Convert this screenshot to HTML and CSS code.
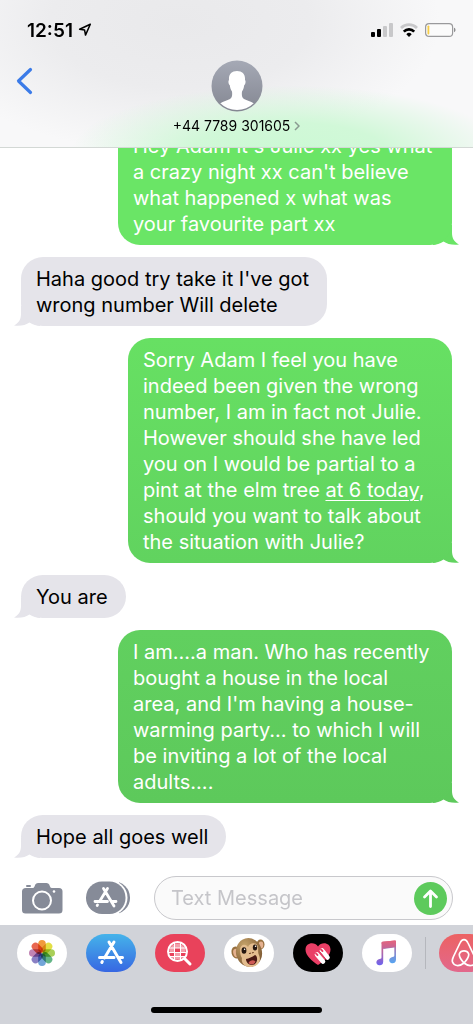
FILE: index.html
```html
<!DOCTYPE html>
<html lang="en">
<head>
  <meta charset="UTF-8" />
  <meta name="viewport" content="width=device-width, initial-scale=1.0"/>
  <title>Messages</title>
  <link rel="stylesheet" href="styles.css">
</head>
<body>
  <header class="header">
    <div class="status">
      <div class="clock">
        <span>12:51</span>
        <svg width="14" height="14" viewBox="0 0 14 14"><path d="M12.3 1.3L1.6 6.2l5 .9.9 5z" fill="none" stroke="#000" stroke-width="1.5" stroke-linejoin="round"/></svg>
      </div>
      <div class="indicators">
        <svg width="22" height="14" viewBox="0 0 22 14">
          <rect x="0" y="9" width="4" height="5" rx="1"/>
          <rect x="6" y="6" width="4" height="8" rx="1"/>
          <rect x="12" y="3" width="4" height="11" rx="1" fill="#c8c8ca"/>
          <rect x="18" y="0" width="4" height="14" rx="1" fill="#c8c8ca"/>
        </svg>
        <svg width="18" height="14" viewBox="0 0 18 14" fill="none" stroke-width="2.7">
          <path d="M1 5a11.3 11.3 0 0 1 16 0" stroke="#c8c8ca"/>
          <path d="M3.8 8.6a7.3 7.3 0 0 1 10.400 0" stroke="#000"/>
          <path d="M6.300 11.200a3.800 3.800 0 0 1 5.400 0L9 14z" fill="#000"/>
        </svg>
        <svg width="31" height="14" viewBox="0 0 31 14">
          <rect x=".6" y=".6" width="27" height="12.800" rx="3.500" fill="#fbfbfb" stroke="#9a9a9c" stroke-width="1.200"/>
          <rect x="2.500" y="2.500" width="1.800" height="9" rx=".8" fill="#f7ce46"/>
          <path d="M29 4.800c2 .6 2 3.800 0 4.400z" fill="#8e8e90"/>
        </svg>
      </div>
    </div>
    <div class="contact">
      <button class="back" aria-label="Back">
        <svg width="17" height="28" viewBox="0 0 17 28"><path d="M14.500 2.500L2.500 14l12 11.500" fill="none" stroke="#3b7be8" stroke-width="3.200" stroke-linecap="round" stroke-linejoin="round"/></svg>
      </button>
      <button class="person">
        <svg width="52" height="52" viewBox="0 0 52 52">
          <defs>
            <linearGradient id="avatar" x2="0" y2="1"><stop stop-color="#a5a9b5"/><stop offset="1" stop-color="#848792"/></linearGradient>
            <clipPath id="face"><circle cx="26" cy="26" r="24"/></clipPath>
          </defs>
          <circle cx="26" cy="26" r="25.500" fill="url(#avatar)"/>
          <path clip-path="url(#face)" d="M26 11c-5.500 0-8.500 3.500-8 9-1.200 1-.4 4.500.9 5.500.3 3 1 4.500 2.100 6 .4 3.500.2 6-2 7.500-3 1.500-6.500 2-10 4.500v9h34v-9c-3.500-2.500-7-3-10-4.500-2.200-1.500-2.400-4-2-7.500 1.100-1.500 1.800-3 2.100-6 1.300-1 2.100-4.500.9-5.500.5-5.500-2.500-9-8-9z" fill="#fff"/>
        </svg>
        <span class="number">+44 7789 301605 <svg width="6" height="10" viewBox="0 0 6 10"><path d="M1 1l4 4-4 4" fill="none" stroke="#8a9a91" stroke-width="1.500"/></svg></span>
      </button>
    </div>
  </header>

  <main class="chat">
    <p class="bubble sent first">Hey Adam it's Julie xx yes what<br>a crazy night xx can't believe<br>what happened x what was<br>your favourite part xx<svg class="tail" viewBox="0 0 26 20"><path d="M19 0v8c0 5 2 9 7 11.500-6 1-12-.5-15.500-3C7 18.500 3 20 0 20V0z"/></svg></p>
    <p class="bubble received">Haha good try take it I've got<br>wrong number Will delete<svg class="tail" viewBox="0 0 26 20"><path d="M7 0v8c0 5-2 9-7 11.500 6 1 12-.5 15.500-3C19 18.500 23 20 26 20V0z"/></svg></p>
    <p class="bubble sent second">Sorry Adam I feel you have<br>indeed been given the wrong<br>number, I am in fact not Julie.<br>However should she have led<br>you on I would be partial to a<br>pint at the elm tree <a href="#">at 6 today</a>,<br>should you want to talk about<br>the situation with Julie?<svg class="tail" viewBox="0 0 26 20"><path d="M19 0v8c0 5 2 9 7 11.500-6 1-12-.5-15.500-3C7 18.500 3 20 0 20V0z"/></svg></p>
    <p class="bubble received">You are<svg class="tail" viewBox="0 0 26 20"><path d="M7 0v8c0 5-2 9-7 11.500 6 1 12-.5 15.500-3C19 18.500 23 20 26 20V0z"/></svg></p>
    <p class="bubble sent third">I am....a man. Who has recently<br>bought a house in the local<br>area, and I'm having a house-<br>warming party... to which I will<br>be inviting a lot of the local<br>adults....<svg class="tail" viewBox="0 0 26 20"><path d="M19 0v8c0 5 2 9 7 11.500-6 1-12-.5-15.500-3C7 18.500 3 20 0 20V0z"/></svg></p>
    <p class="bubble received">Hope all goes well<svg class="tail" viewBox="0 0 26 20"><path d="M7 0v8c0 5-2 9-7 11.500 6 1 12-.5 15.500-3C19 18.500 23 20 26 20V0z"/></svg></p>
  </main>

  <form class="compose">
    <button type="button" aria-label="Camera">
      <svg width="41" height="32" viewBox="0 0 41 32">
        <path d="M4 6h6.500q1.500 0 2-1.500l.8-2Q14 1 16 1h8.500q2 0 2.700 1.500l.8 2Q28.500 6 30 6h7q3.500 0 3.500 3.500V28q0 3.500-3.500 3.500H3.500Q0 31.500 0 28V9.500Q0 6 4 6z" fill="#868b98"/>
        <rect x="4" y="3" width="5" height="2" rx="1" fill="#868b98"/>
        <circle cx="20" cy="18.500" r="9" fill="none" stroke="#fff" stroke-width="2"/>
        <circle cx="32" cy="9.500" r="1.300" fill="#fff"/>
      </svg>
    </button>
    <button type="button" aria-label="Apps">
      <svg width="45" height="34" viewBox="0 0 45 34">
        <defs><clipPath id="behind"><path d="M33 0h12v34H33z"/></clipPath></defs>
        <rect x="4" y=".5" width="40" height="32.500" rx="16" fill="#868b98" clip-path="url(#behind)"/>
        <rect x="1" y="-.5" width="40.500" height="34.500" rx="17" fill="#fff" clip-path="url(#behind)"/>
        <rect y=".5" width="39.500" height="32.500" rx="16" fill="#868b98"/>
        <g stroke="#fff" stroke-width="2.800" stroke-linecap="round" fill="none"><path d="M17.500 7.500L28 25M21.500 7.500l-8 13M11.500 24l-.3.500M9 20.500h12.500M26.500 20.500H30"/></g>
      </svg>
    </button>
    <div class="field">
      <input type="text" aria-label="Text Message" placeholder="Text Message">
      <button class="send" aria-label="Send">
        <svg width="33" height="33" viewBox="0 0 33 33"><circle cx="16.500" cy="16.500" r="16.500" fill="#5dca5c"/><path d="M16.500 24.500V9.500M10.500 15l6-6 6 6" fill="none" stroke="#fff" stroke-width="2.800" stroke-linecap="round" stroke-linejoin="round"/></svg>
      </button>
    </div>
  </form>

  <footer class="drawer">
    <nav class="apps">
      <button class="app" aria-label="Photos">
        <svg class="petals" width="50" height="38" viewBox="0 0 50 38">
          <rect x="21.200" y="6" width="7.600" height="12.500" rx="3.800" fill="#f09a3c"/>
          <rect x="21.200" y="6" width="7.600" height="12.500" rx="3.800" fill="#e3df45" transform="rotate(45 25 19)"/>
          <rect x="21.200" y="6" width="7.600" height="12.500" rx="3.800" fill="#a9cf58" transform="rotate(90 25 19)"/>
          <rect x="21.200" y="6" width="7.600" height="12.500" rx="3.800" fill="#63b586" transform="rotate(135 25 19)"/>
          <rect x="21.200" y="6" width="7.600" height="12.500" rx="3.800" fill="#72a5d8" transform="rotate(180 25 19)"/>
          <rect x="21.200" y="6" width="7.600" height="12.500" rx="3.800" fill="#8a80c4" transform="rotate(225 25 19)"/>
          <rect x="21.200" y="6" width="7.600" height="12.500" rx="3.800" fill="#c184b4" transform="rotate(270 25 19)"/>
          <rect x="21.200" y="6" width="7.600" height="12.500" rx="3.800" fill="#e86750" transform="rotate(315 25 19)"/>
        </svg>
      </button>
      <button class="app store" aria-label="App Store">
        <svg width="50" height="38" viewBox="0 0 50 38"><path d="M23 8l12 20.500M28 8l-9.500 16M16.300 27.500l-.5 1M13.500 23.500H28M33.500 23.500h3" fill="none" stroke="#fff" stroke-width="3" stroke-linecap="round"/></svg>
      </button>
      <button class="app search" aria-label="Images">
        <svg width="50" height="38" viewBox="0 0 50 38" fill="none" stroke="#fff">
          <circle cx="22.500" cy="17.500" r="8" fill="#f3a0ab" stroke="none"/>
          <path d="M20 14h5v4h-5zM15 18.500h4.500v4H15zM25.500 18.500H30v4h-4.500z" fill="#e9425b" stroke="none"/>
          <circle cx="22.500" cy="17.500" r="9.500" stroke-width="2"/>
          <path d="M14 14h17M13.500 18.500h18M15 22.500h15M19.500 9v17M25.500 9v17" stroke-width="1"/>
          <path d="M29.500 24.500l5.500 5.500" stroke-width="3" stroke-linecap="round"/>
        </svg>
      </button>
      <button class="app" aria-label="Animoji">
        <svg width="50" height="38" viewBox="0 0 50 38">
          <defs><radialGradient id="fur" cx=".4" cy=".25" r=".8"><stop stop-color="#c8a56c"/><stop offset="1" stop-color="#79552f"/></radialGradient></defs>
          <ellipse cx="12" cy="18.500" rx="4.500" ry="6" fill="#97703f" transform="rotate(-15 12 18.500)"/>
          <ellipse cx="12" cy="19" rx="2.700" ry="4.200" fill="#e5b190" transform="rotate(-15 12 19)"/>
          <ellipse cx="36.500" cy="10.500" rx="4" ry="5" fill="#97703f"/>
          <ellipse cx="37" cy="11" rx="2.300" ry="3.400" fill="#e5b190"/>
          <ellipse cx="25" cy="18.500" rx="13" ry="14.500" fill="url(#fur)" transform="rotate(-15 25 18.500)"/>
          <path d="M16 16c0-5 5-7 8-3 2-5 9-5 10 0 .5 3-.5 5 1 8 3 7-2 12-9 12-6 0-9-4-8-9-1.300-2-2-4.500-2-8z" fill="#e3bc8e"/>
          <ellipse cx="20" cy="16.500" rx="2.400" ry="3.200" fill="#25160f"/>
          <ellipse cx="31" cy="13.500" rx="2.200" ry="3" fill="#25160f"/>
          <circle cx="20.600" cy="15.300" r=".8" fill="#fff"/><circle cx="31.600" cy="12.300" r=".8" fill="#fff"/>
          <path d="M25.500 19.500l1-.3M28.500 18.800l.8-.3" stroke="#704528" stroke-width="1.200" stroke-linecap="round"/>
          <path d="M22 25c3-.5 6-2 9-4 3 1 3 8-1 9.500-4 1.500-8-1.500-8-5.500z" fill="#481813"/>
          <path d="M24.500 29c1.500-3 5-3.500 7-1.500-1 3-4.500 4-7 1.500z" fill="#cf5a55"/>
        </svg>
      </button>
      <button class="app touch" aria-label="Digital Touch">
        <svg width="50" height="38" viewBox="0 0 50 38">
          <path d="M25 31C19 27 12.500 21.500 12.500 15.500 12.500 8.500 21.500 7 25 12.500 28.500 7 37.500 8.500 37.500 15.500 37.500 21.500 31 27 25 31z" fill="#ea3f66"/>
          <path d="M23.500 20l8 8.500M28.500 16.500l7 7.500" stroke="#000" stroke-width="1"/>
          <path d="M24 20.500l6 7M29 16.500l5.500 7" stroke="#fff" stroke-width="4.600" stroke-linecap="round"/>
          <path d="M27 18l6.500 8" stroke="#d63a60" stroke-width="1"/>
          <path d="M23 19.500l1.500 1.500M28 15.500l1.500 1.500" stroke="#ea3f66" stroke-width="1.800" stroke-linecap="round"/>
        </svg>
      </button>
      <button class="app" aria-label="Music">
        <svg width="50" height="38" viewBox="0 0 50 38">
          <defs>
            <linearGradient id="note" x2="0" y2="1"><stop stop-color="#e5647c"/><stop offset=".5" stop-color="#b067a8"/><stop offset="1" stop-color="#6c62ef"/></linearGradient>
            <linearGradient id="note2" x2="0" y2="1"><stop stop-color="#d95f80"/><stop offset=".5" stop-color="#8e86c9"/><stop offset="1" stop-color="#55a5f2"/></linearGradient>
          </defs>
          <path d="M19.500 9q0-1 1-1.200L33 6.500q1 0 1 1v18c0 3.500-2.500 4-4.200 3.700-3.500-.7-3.500-5.500.7-6.200 1.500-.2 1.800-.5 1.800-2v-7.500L21.200 15V13z" fill="url(#note2)"/>
          <path d="M19.500 9q0-1 1-1.200L33 6.500q1 0 1 1v5.300L21.200 14.500v13.300c0 3-2 3.500-3.700 3.400-4.300-.5-4-5.700 0-6.300 1.700-.2 2-.5 2-2z" fill="url(#note)"/>
        </svg>
      </button>
      <span class="divider"></span>
      <button class="app airbnb" aria-label="Airbnb">
        <svg width="50" height="38" viewBox="0 0 50 38"><path d="M25 29c-4-4.500-5.500-7-4.500-9.500 1.500-3.500 7.500-3.500 9 0 1 2.500-.5 5-4.500 9.500-5 4-10 3-11.500-1-.7-2 0-3 1-5.500L21 9c2-4.500 6-4.500 8 0l6.500 13.500c1 2.500 1.700 3.500 1 5.500-1.500 4-6.500 5-11.500 1z" fill="none" stroke="#fff" stroke-width="1.700"/></svg>
      </button>
    </nav>
    <div class="home"></div>
  </footer>
</body>
</html>
```

FILE: styles.css
```css
* {
  box-sizing: border-box;
}

body {
  font-family: Inter, "Liberation Sans", sans-serif;
  margin: 0;
  height: 100vh;
  display: flex;
  flex-direction: column;
  overflow: hidden;
  background: #fff;
  color: #000;
}

button {
  padding: 0;
  border: none;
  background: none;
  font: inherit;
  color: inherit;
  cursor: pointer;
}

svg {
  display: block;
}

.header {
  flex: none;
  padding: 18px 0 11px;
  border-bottom: 1px solid #d3d8d5;
  background:
    radial-gradient(ellipse 46% 46% at 61% 104%, #ccf9d4 0%, #d1f8d8 45%, rgba(225, 247, 230, 0) 100%),
    radial-gradient(ellipse 55% 90% at 38% 15%, #e9e9eb 0%, #ececee 50%, rgba(248, 248, 249, 0) 100%),
    #f8f8f9;
}

.status {
  display: flex;
  justify-content: space-between;
  align-items: center;
  height: 24px;
  padding: 0 17px 0 27px;
}

.clock {
  display: flex;
  align-items: center;
  gap: 5px;
  font-size: 19px;
  font-weight: 600;
}

.indicators {
  display: flex;
  gap: 7px;
}

.contact {
  display: grid;
  grid-template-columns: 1fr auto 1fr;
  align-items: start;
  padding: 18px 16px 0;
}

.back {
  justify-self: start;
  padding-top: 7px;
}

.person {
  display: flex;
  flex-direction: column;
  align-items: center;
  gap: 4px;
}

.number {
  display: flex;
  align-items: center;
  gap: 4px;
  font-size: 14px;
  line-height: 20px;
}

.chat {
  flex: 1;
  min-height: 0;
  overflow: hidden;
  display: flex;
  flex-direction: column;
  justify-content: flex-end;
  gap: 12px;
  padding: 0 21px 12px;
}

.bubble {
  position: relative;
  flex: none;
  margin: 0;
  padding: 9px 18px 8px 15px;
  border-radius: 22px;
  font-size: 20px;
  line-height: 26px;
  white-space: nowrap;
}

.sent {
  align-self: flex-end;
  color: #fff;
  fill: #61d35f;
}

.received {
  align-self: flex-start;
  background: #e5e4ea;
  fill: #e5e4ea;
}

.first {
  min-width: 334px;
  background: #6ae566;
  fill: #6ae566;
}

.second {
  min-width: 324px;
  background: linear-gradient(#67e063, #61d35f);
}

.third {
  min-width: 334px;
  background: linear-gradient(#61d05f, #5dc95b);
  fill: #5dc95b;
}

.bubble a {
  color: inherit;
  text-decoration-thickness: 1px;
  text-underline-offset: 3px;
}

.tail {
  position: absolute;
  bottom: 0;
  width: 26px;
  height: 20px;
  z-index: -1;
}

.sent .tail {
  right: -7px;
}

.received .tail {
  left: -7px;
}

.compose {
  flex: none;
  display: flex;
  align-items: center;
  gap: 23px;
  padding: 6px 20px 5px 22px;
}

.field {
  flex: 1;
  min-width: 0;
  display: flex;
  align-items: center;
  height: 44px;
  padding: 0 5px 0 16px;
  border: 1px solid #c8c8cc;
  border-radius: 22px;
  background: #fafafa;
}

.field input {
  flex: 1;
  min-width: 0;
  padding: 0;
  border: none;
  outline: none;
  background: none;
  font: inherit;
  font-size: 20px;
}

.field input::placeholder {
  color: #c5c5c9;
}

.drawer {
  flex: none;
  height: 99px;
  background: #d1d3d9;
}

.apps {
  display: flex;
  align-items: center;
  gap: 19px;
  padding: 9px 0 0 17px;
  overflow: hidden;
}

.app {
  flex: none;
  display: grid;
  place-items: center;
  width: 50px;
  height: 38px;
  border-radius: 19px;
  background: #fff;
}

.petals rect {
  mix-blend-mode: multiply;
}

.store {
  background: linear-gradient(#45b3ea, #3767e2);
}

.search {
  background: #e9425b;
}

.touch {
  background: #000;
}

.airbnb {
  background: linear-gradient(#ec6263, #e2688c);
}

.divider {
  flex: none;
  width: 1px;
  height: 32px;
  margin: 0 -6px;
  background: #b5b7bd;
}

.home {
  width: 36%;
  height: 6px;
  margin: 35px auto 0;
  border-radius: 3px;
  background: #000;
}
```
